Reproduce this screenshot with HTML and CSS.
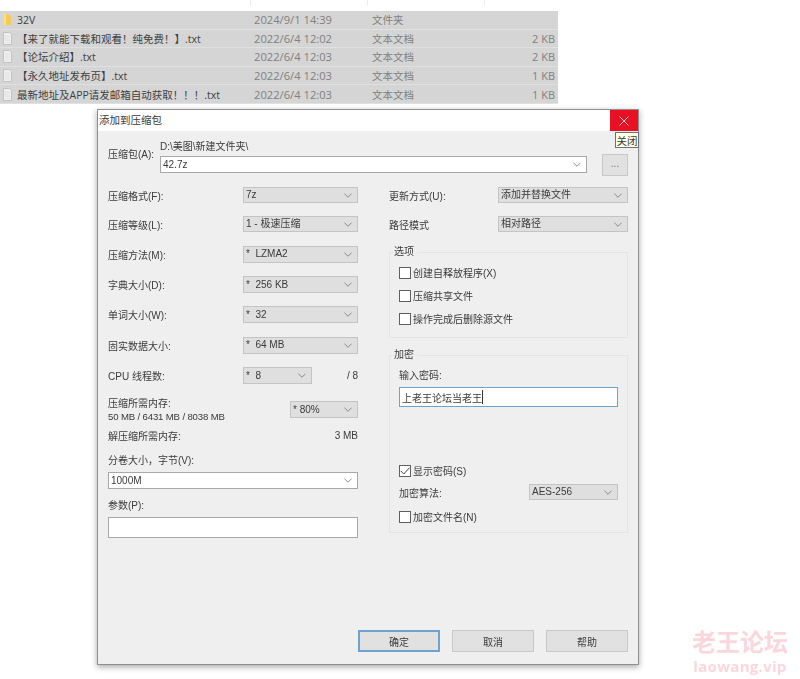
FILE: index.html
```html
<!DOCTYPE html>
<html lang="zh-CN">
<head>
<meta charset="utf-8">
<title>添加到压缩包</title>
<link rel="stylesheet" href="styles.css">
</head>
<body>
<svg class="defs" width="0" height="0" aria-hidden="true">
  <symbol id="chev" viewBox="0 0 9 5"><path d="M.5.5 4.5 4.5 8.5.5" fill="none" stroke="#7d7d7d" stroke-width="1"/></symbol>
  <symbol id="doc" viewBox="0 0 9 13"><path d="M.5.5h6l2 2v10h-8z" fill="#efefef" stroke="#c2c2c2"/><path d="M2 4h5M2 6h5M2 8h5M2 10h5" stroke="#e2e2e2"/></symbol>
</svg>
<div class="canvas">
  <div class="ticks"><i></i><i></i><i></i></div>
  <section class="files">
    <div class="file"><svg class="ficon" viewBox="0 0 9 13"><path d="M1 1h4l3 2v9H1z" fill="#f5cb55"/><path d="M1 1h2v11H1z" fill="#fbe08c"/></svg><span class="fname">32V</span><span class="fdate">2024/9/1 14:39</span><span class="ftype">文件夹</span><span class="fsize"></span></div>
    <div class="file"><svg class="ficon"><use href="#doc"/></svg><span class="fname">【来了就能下载和观看！纯免费！】.txt</span><span class="fdate">2022/6/4 12:02</span><span class="ftype">文本文档</span><span class="fsize">2 KB</span></div>
    <div class="file"><svg class="ficon"><use href="#doc"/></svg><span class="fname">【论坛介绍】.txt</span><span class="fdate">2022/6/4 12:03</span><span class="ftype">文本文档</span><span class="fsize">2 KB</span></div>
    <div class="file"><svg class="ficon"><use href="#doc"/></svg><span class="fname">【永久地址发布页】.txt</span><span class="fdate">2022/6/4 12:03</span><span class="ftype">文本文档</span><span class="fsize">1 KB</span></div>
    <div class="file"><svg class="ficon"><use href="#doc"/></svg><span class="fname">最新地址及APP请发邮箱自动获取！！！.txt</span><span class="fdate">2022/6/4 12:03</span><span class="ftype">文本文档</span><span class="fsize">1 KB</span></div>
  </section>

  <div class="dialog">
    <header class="titlebar">
      <span class="title">添加到压缩包</span>
      <span class="close"><svg width="10" height="10" viewBox="0 0 10 10"><path d="M.5.5l9 9M9.5.5l-9 9" stroke="#f6c9cd" fill="none"/></svg></span>
      <span class="tooltip">关闭</span>
    </header>
    <div class="content">
      <div class="archive">
        <span class="archive-label">压缩包(A):</span>
        <div class="archive-main">
          <div class="archive-path">D:\美图\新建文件夹\</div>
          <div class="combo edit"><span>42.7z</span><svg class="chev"><use href="#chev"/></svg></div>
        </div>
        <button class="browse">...</button>
      </div>
      <div class="columns">
        <div class="col col-left">
          <div class="rows">
            <div class="row"><span>压缩格式(F):</span><div class="combo w115 h16"><span>7z</span><svg class="chev"><use href="#chev"/></svg></div></div>
            <div class="row"><span>压缩等级(L):</span><div class="combo w115 h16"><span>1 - 极速压缩</span><svg class="chev"><use href="#chev"/></svg></div></div>
            <div class="row"><span>压缩方法(M):</span><div class="combo w115"><span>*&nbsp; LZMA2</span><svg class="chev"><use href="#chev"/></svg></div></div>
            <div class="row"><span>字典大小(D):</span><div class="combo w115"><span>*&nbsp; 256 KB</span><svg class="chev"><use href="#chev"/></svg></div></div>
            <div class="row"><span>单词大小(W):</span><div class="combo w115"><span>*&nbsp; 32</span><svg class="chev"><use href="#chev"/></svg></div></div>
            <div class="row"><span>固实数据大小:</span><div class="combo w115"><span>*&nbsp; 64 MB</span><svg class="chev"><use href="#chev"/></svg></div></div>
            <div class="row"><span class="w135">CPU 线程数:</span><div class="combo w69"><span>*&nbsp; 8</span><svg class="chev"><use href="#chev"/></svg></div><span class="push">/ 8</span></div>
          </div>
          <div class="row mem">
            <div class="mem-text"><div>压缩所需内存:</div><div class="mem-values">50 MB / 6431 MB / 8038 MB</div></div>
            <div class="combo w68"><span>* 80%</span><svg class="chev"><use href="#chev"/></svg></div>
          </div>
          <div class="row decomp"><span>解压缩所需内存:</span><span>3 MB</span></div>
          <div class="stack-label vol">分卷大小，字节(V):</div>
          <div class="combo edit full"><span>1000M</span><svg class="chev"><use href="#chev"/></svg></div>
          <div class="stack-label par">参数(P):</div>
          <div class="textbox"></div>
        </div>
        <div class="col col-right">
          <div class="row"><span>更新方式(U):</span><div class="combo w130 h16"><span>添加并替换文件</span><svg class="chev"><use href="#chev"/></svg></div></div>
          <div class="row second"><span>路径模式</span><div class="combo w130 h16"><span>相对路径</span><svg class="chev"><use href="#chev"/></svg></div></div>
          <div class="group options">
            <div class="legend">选项</div>
            <label class="check first"><i class="box"></i>创建自释放程序(X)</label>
            <label class="check"><i class="box"></i>压缩共享文件</label>
            <label class="check"><i class="box"></i>操作完成后删除源文件</label>
          </div>
          <div class="group encrypt">
            <div class="legend">加密</div>
            <div class="pw-label">输入密码:</div>
            <div class="pw"><span>上老王论坛当老王</span><i class="caret"></i></div>
            <label class="check show"><i class="box"><svg width="10" height="8" viewBox="0 0 10 8"><path d="M.8 4l3 3L9.4.8" fill="none" stroke="#444"/></svg></i>显示密码(S)</label>
            <div class="row algo"><span>加密算法:</span><div class="combo w89 h16"><span>AES-256</span><svg class="chev"><use href="#chev"/></svg></div></div>
            <label class="check names"><i class="box"></i>加密文件名(N)</label>
          </div>
        </div>
      </div>
      <footer class="buttons">
        <button class="btn primary">确定</button>
        <button class="btn">取消</button>
        <button class="btn">帮助</button>
      </footer>
    </div>
  </div>

  <div class="watermark"><div class="wm-cn">老王论坛</div><div class="wm-en">laowang.vip</div></div>
</div>
</body>
</html>
```
FILE: styles.css
```css
* { box-sizing: border-box; }
html, body { margin: 0; padding: 0; background: #fff; }
body { font-family: "Liberation Sans", "Noto Sans CJK SC", sans-serif; font-size: 10px; color: #3a3a3a; overflow: hidden; }
.defs { position: absolute; }
.canvas { position: relative; width: 800px; height: 679px; overflow: hidden; filter: blur(0.35px); }

.ticks { display: flex; height: 6px; padding-left: 250px; }
.ticks i { width: 117px; border-left: 1px solid #eeeeee; }
.files { width: 558px; margin-top: 5px; background: #d5d5d5; font-family: "Open Sans", "Noto Sans CJK SC", sans-serif; }
.file { display: flex; align-items: center; height: 18.6px; font-size: 10.5px; border-bottom: 1px solid #e0e0e0; color: #404040; }
.ficon { width: 9px; height: 13px; margin: 0 5px 0 3px; flex: none; }
.fname { width: 237px; white-space: nowrap; }
.fdate { width: 118px; color: #808080; font-size: 11.2px; }
.ftype { width: 118px; color: #808080; }
.fsize { width: 65px; text-align: right; color: #808080; font-size: 11px; }

.dialog { position: absolute; left: 97px; top: 109px; width: 542px; height: 556px; display: flex; flex-direction: column; background: #efefef; border: 1px solid #8e8e8e; box-shadow: 0 2px 6px rgba(0,0,0,.35); }
.titlebar { position: relative; height: 21px; flex: none; background: #fff; display: flex; align-items: center; padding: 0 0 2px 1px; font-size: 10.5px; }
.close { position: absolute; right: 0; top: 0; width: 28px; height: 21px; background: #e81123; display: flex; align-items: center; justify-content: center; }
.tooltip { position: absolute; right: -1px; top: 22px; width: 24px; height: 16px; background: #ffffe6; border: 1px solid #707070; display: flex; align-items: center; justify-content: center; font-size: 10.5px; z-index: 2; }

.content { flex: 1; display: flex; flex-direction: column; padding: 0 10px 12px; }
.archive { display: flex; height: 46px; margin-top: 9px; align-items: flex-start; }
.archive-label { width: 52px; margin-top: 7px; line-height: 15px; }
.archive-main { width: 427px; }
.archive-path { height: 16px; line-height: 14px; }
.browse { width: 26px; height: 22px; margin: 14px 0 0 15px; padding: 0 0 4px; font: inherit; color: #777; background: #e1e1e1; border: 1px solid #c8c8c8; }

.combo { display: flex; align-items: center; justify-content: space-between; height: 17px; padding: 0 5px 0 2px; background: #dfdfdf; border: 1px solid #c4c4c4; white-space: nowrap; line-height: 14px; }
.combo.h16 { height: 16px; }
.combo.edit { background: #fff; border-color: #a8a8a8; padding-left: 2px; }
.chev { width: 8px; height: 5px; flex: none; }
.w115 { width: 115px; }
.w130 { width: 130px; }
.w69 { width: 69px; }
.w68 { width: 68px; }
.w89 { width: 89px; }
.w135 { width: 135px; flex: none; }
.full { width: 250px; }

.columns { display: flex; gap: 31px; margin-top: 1px; }
.col { width: 250px; display: flex; flex-direction: column; }
.col-right { width: 239px; }
.rows { display: flex; flex-direction: column; gap: 13.35px; }
.row { display: flex; align-items: center; justify-content: space-between; }
.push { margin-left: auto; }
.mem { margin-top: 13px; height: 25px; }
.mem-text { line-height: 13px; }
.mem-values { font-size: 9.6px; letter-spacing: -.15px; }
.decomp { margin-top: 6px; height: 14px; }
.stack-label { height: 14px; line-height: 14px; }
.vol { margin-top: 12px; margin-bottom: 4px; }
.par { margin-top: 10px; margin-bottom: 4px; }
.textbox { height: 21px; background: #fff; border: 1px solid #a8a8a8; }

.second { margin-top: 13px; }
.group { border: 1px solid #e4e4e4; padding: 0 9px; }
.legend { height: 14px; margin: -8px 0 0 -5px; line-height: 14px; width: max-content; padding-right: 3px; background: #efefef; }
.options { height: 86px; margin-top: 20px; }
.check { display: flex; align-items: center; gap: 2px; height: 13px; margin-top: 10px; white-space: nowrap; }
.check.first { margin-top: 7px; }
.box { width: 12px; height: 12px; flex: none; background: #fff; border: 1px solid #5f5f5f; display: flex; align-items: center; justify-content: center; }
.encrypt { height: 178px; margin-top: 17px; }
.pw-label { height: 14px; line-height: 14px; margin-top: 7px; }
.pw { display: flex; align-items: center; height: 20px; width: 219px; margin-top: 4px; padding-left: 2px; background: #fff; border: 1px solid #6da3c9; }
.caret { width: 1px; height: 14px; background: #333; }
.show { margin-top: 57px; }
.algo { margin-top: 7px; }
.names { margin-top: 10px; }

.buttons { display: flex; justify-content: flex-end; gap: 12px; margin-top: auto; }
.btn { width: 82px; height: 22px; padding: 0; font: inherit; color: #3a3a3a; background: #e1e1e1; border: 1px solid #c8c8c8; }
.btn.primary { border: 2px solid #6fa3cf; }

.watermark { position: absolute; left: 692px; top: 626px; text-align: center; color: #fbd6df; font-weight: 700; }
.wm-cn { font-size: 24px; line-height: 30px; font-family: "Noto Sans CJK SC", sans-serif; }
.wm-en { font-size: 15px; line-height: 21px; letter-spacing: .3px; font-family: "Open Sans", sans-serif; }
```
